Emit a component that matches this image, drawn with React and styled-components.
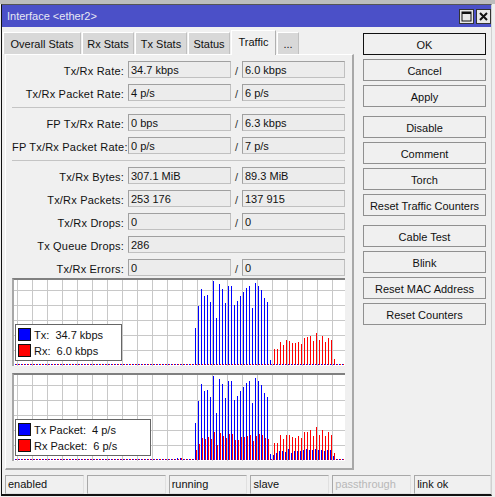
import React from 'react';
import styled, { createGlobalStyle } from 'styled-components';

const GlobalStyle = createGlobalStyle`
  html, body {
    margin: 0;
    padding: 0;
    background: #efefef;
  }
  body {
    font-family: "Liberation Sans", Arial, sans-serif;
    font-size: 11px;
    color: #111;
  }
`;

const Page = styled.div`
  width: 495px;
  height: 497px;
  overflow: hidden;
`;

const TopEdge = styled.div`
  height: 4px;
  background: #bdbdbd;
`;

const Window = styled.div`
  width: 491px;
  height: 492px;
  margin-left: 1px;
  box-sizing: border-box;
  background: #f0f0f0;
  border-left: 1px solid #111;
  border-top: 1px solid #555;
  border-bottom: 2px solid #111;
  border-right: 1px solid #d0d0d0;
  display: flex;
  flex-direction: column;
`;

const TitleBar = styled.div`
  height: 22px;
  background: #4b50c8;
  display: flex;
  align-items: center;
  justify-content: space-between;
  padding: 0 0 0 5px;
  color: #e8e8f4;
`;

const TitleButtons = styled.div`
  display: flex;
  gap: 2px;
`;

const TitleButton = styled.div`
  width: 15px;
  height: 15px;
  box-sizing: border-box;
  background: #e8e8e8;
  border: 1px solid #333;
  display: flex;
  align-items: center;
  justify-content: center;
`;

const Body = styled.div`
  flex: 1;
  display: flex;
  min-height: 0;
`;

const LeftPane = styled.div`
  width: 351px;
  display: flex;
  flex-direction: column;
`;

const TabStrip = styled.div`
  height: 27px;
  display: flex;
  align-items: flex-end;
  gap: 1px;
  padding-left: 1px;
  box-sizing: border-box;
`;

const Tab = styled.div`
  width: ${p => p.$w}px;
  height: ${p => (p.$active ? 25 : 22)}px;
  box-sizing: border-box;
  display: flex;
  align-items: center;
  justify-content: center;
  background: ${p => (p.$active ? '#f0f0f0' : '#d8d8d8')};
  border-top: 1px solid #fff;
  border-left: 1px solid #fff;
  border-right: 1px solid ${p => (p.$active ? '#b0b0b0' : '#c0c0c0')};
  padding-bottom: ${p => (p.$active ? 2 : 0)}px;
  margin-bottom: ${p => (p.$active ? -1 : 0)}px;
  position: relative;
`;

const Panel = styled.div`
  width: 349px;
  height: 416px;
  margin-left: 3px;
  box-sizing: border-box;
  border-top: 1px solid #fff;
  border-left: 1px solid #fff;
  border-right: 2px solid #a8a8a8;
  border-bottom: 2px solid #a8a8a8;
  padding: 6px 0 0 6px;
`;

const Row = styled.div`
  display: grid;
  grid-template-columns: 116px 103px 11px 103px;
  height: 17px;
  margin-bottom: 6px;
  align-items: center;
`;

const Label = styled.div`
  text-align: right;
  margin-right: 4px;
  padding-top: 2px;
  letter-spacing: 0.2px;
  white-space: nowrap;
`;

const Field = styled.div`
  height: 17px;
  box-sizing: border-box;
  border: 1px solid #a0a0a0;
  border-right-color: #c0c0c0;
  border-bottom-color: #c0c0c0;
  background: #ececec;
  padding-left: 2px;
  line-height: 16px;
  grid-column: ${p => (p.$wide ? '2 / 5' : 'auto')};
  white-space: nowrap;
`;

const Slash = styled.div`
  text-align: center;
  padding-top: 2px;
  color: #333;
`;

const Separator = styled.div`
  width: 333px;
  height: 1px;
  background: #c4c4c4;
  margin: 1px 0 6px;
`;

const GraphBox = styled.div`
  position: relative;
  width: 333px;
  height: 88px;
  box-sizing: border-box;
  margin-top: ${p => p.$top}px;
  background: #fff;
  border-top: 2px solid #808080;
  border-left: 2px solid #a8a8a8;
  svg {
    display: block;
  }
`;

const Legend = styled.div`
  position: absolute;
  left: 1px;
  top: 44px;
  width: ${p => p.$w}px;
  height: 37px;
  box-sizing: border-box;
  background: #fff;
  border: 1px solid #666;
  padding: 3px 2px;
  display: flex;
  flex-direction: column;
  gap: 3px;
`;

const LegendRow = styled.div`
  display: flex;
  align-items: center;
  height: 13px;
  gap: 3px;
  white-space: pre;
`;

const Swatch = styled.div`
  width: 13px;
  height: 13px;
  box-sizing: border-box;
  border: 1px solid #111;
  background: ${p => p.$color};
`;

const ButtonColumn = styled.div`
  margin-left: 10px;
  padding-top: 6px;
  width: 123px;
  display: flex;
  flex-direction: column;
  gap: 9px;
`;

const ButtonGroup = styled.div`
  display: flex;
  flex-direction: column;
  gap: 4px;
`;

const Button = styled.div`
  height: 22px;
  box-sizing: border-box;
  display: flex;
  align-items: center;
  justify-content: center;
  padding-top: 1px;
  background: #f0f0f0;
  border: 1px solid ${p => (p.$primary ? '#111' : '#909090')};
`;

const StatusBar = styled.div`
  display: flex;
  gap: 3px;
  padding: 3px 0 0 3px;
`;

const StatusCell = styled.div`
  width: ${p => p.$w || 79}px;
  height: 19px;
  box-sizing: border-box;
  border-top: 1px solid #a8a8a8;
  border-left: 1px solid #a8a8a8;
  border-right: 1px solid #e0e0e0;
  border-bottom: 1px solid #e0e0e0;
  padding-left: 2px;
  line-height: 17px;
  color: ${p => (p.$dim ? '#b8b8b8' : '#111')};
`;

// bar tops read from the graph, in 3x pixels above the baseline (275)
const txX = [46, 55, 64, 73, 82, 91, 100, 109, 118, 127, 136, 145, 154, 163, 172, 181, 190, 199, 208, 217, 226, 235, 244, 253, 262, 271];
const txTop = [165, 99, 48, 69, 66, 87, 24, 135, 33, 48, 90, 39, 39, 96, 84, 69, 57, 45, 39, 105, 30, 39, 51, 75, 87, 261];
const rxX = [283, 292, 301, 310, 319, 328, 337, 346, 355, 364, 373, 382, 391, 400, 409, 418, 427, 436, 445, 454, 463];
const rxTop = [228, 228, 207, 216, 201, 204, 210, 210, 207, 213, 195, 192, 189, 204, 180, 201, 189, 207, 195, 201, 258];

const pktRxX = [48, 57, 66, 75, 84, 93, 102, 111, 120, 129, 138, 147, 156, 165, 174, 183, 192, 201, 210, 219, 228, 237, 246, 255, 264];
const pktRxTop = [245, 228, 210, 213, 207, 213, 192, 231, 195, 204, 210, 198, 198, 216, 216, 207, 207, 204, 201, 219, 204, 198, 201, 210, 213];
const pktTxX = [271, 280, 289, 298, 307, 316, 325, 334, 343, 352, 361, 370, 379, 388, 397, 406, 415, 424, 433, 442, 451, 460];
const pktTxTop = [258, 261, 255, 249, 249, 252, 243, 255, 249, 249, 249, 246, 243, 246, 246, 243, 246, 246, 249, 246, 246, 264];
const pktRx2Top = [225, 225, 201, 213, 201, 201, 207, 210, 204, 210, 192, 192, 186, 204, 177, 201, 186, 204, 192, 201, 255];

const BLUE = '#0000ff';
const RED = '#ff0000';

const toBars = (xs, tops, color) =>
  xs.map((x, i) => ({ x: Math.round(166 + x / 3), h: Math.round((275 - tops[i]) / 3), color }));

const traffic = [...toBars(txX, txTop, BLUE), ...toBars(rxX, rxTop, RED)];
const packets = [
  ...toBars(txX.slice(0, 25), txTop.slice(0, 25), BLUE),
  ...toBars(pktRxX, pktRxTop, RED),
  ...toBars(pktTxX, pktTxTop, BLUE),
  ...toBars(rxX, pktRx2Top, RED),
  { x: 166, h: 2, color: BLUE },
  { x: 167, h: 2, color: RED },
  { x: 163, h: 2, color: BLUE },
];

function GraphPlot({ bars }) {
  const grid = [];
  for (let x = 3; x < 331; x += 15) {
    grid.push(<rect key={`v${x}`} x={x} y={0} width={1} height={86} fill="#c8c8c8" />);
  }
  for (let y = 10; y < 85; y += 15) {
    grid.push(<rect key={`h${y}`} x={0} y={y} width={331} height={1} fill="#c8c8c8" />);
  }
  const dots = [];
  for (let x = 1; x < 331; x += 3) {
    dots.push(<rect key={`b${x}`} x={x} y={84} width={1} height={1} fill={BLUE} />);
    dots.push(<rect key={`r${x}`} x={x + 1} y={84} width={1} height={1} fill={RED} />);
  }
  return (
    <svg width="331" height="86" shapeRendering="crispEdges">
      {grid}
      {dots}
      {bars.map((b, i) => (
        <rect key={i} x={b.x} y={85 - b.h} width={1} height={b.h} fill={b.color} />
      ))}
    </svg>
  );
}

function Graph({ top, bars, width, lines }) {
  return (
    <GraphBox $top={top}>
      <GraphPlot bars={bars} />
      <Legend $w={width}>
        {lines.map(line => (
          <LegendRow key={line.text}>
            <Swatch $color={line.color} />
            <span>{line.text}</span>
          </LegendRow>
        ))}
      </Legend>
    </GraphBox>
  );
}

const tabs = [
  { name: 'Overall Stats', w: 78 },
  { name: 'Rx Stats', w: 52 },
  { name: 'Tx Stats', w: 52 },
  { name: 'Status', w: 42 },
  { name: 'Traffic', w: 45, active: true },
  { name: '...', w: 22 },
];

function StatRow({ label, a, b }) {
  return (
    <Row>
      <Label>{label}</Label>
      {b === undefined ? (
        <Field $wide>{a}</Field>
      ) : (
        <>
          <Field>{a}</Field>
          <Slash>/</Slash>
          <Field>{b}</Field>
        </>
      )}
    </Row>
  );
}

export default function App() {
  return (
    <Page>
      <GlobalStyle />
      <TopEdge />
      <Window>
        <TitleBar>
          <span>Interface &lt;ether2&gt;</span>
          <TitleButtons>
            <TitleButton>
              <svg width="11" height="11" viewBox="0 0 11 11">
                <rect x="1" y="1" width="9" height="9" fill="none" stroke="#111" strokeWidth="1" />
                <rect x="1" y="1" width="9" height="2" fill="#111" />
              </svg>
            </TitleButton>
            <TitleButton>
              <svg width="11" height="11" viewBox="0 0 11 11">
                <path d="M2 2 L9 9 M9 2 L2 9" stroke="#111" strokeWidth="2" />
              </svg>
            </TitleButton>
          </TitleButtons>
        </TitleBar>
        <Body>
          <LeftPane>
            <TabStrip>
              {tabs.map(t => (
                <Tab key={t.name} $w={t.w} $active={t.active}>{t.name}</Tab>
              ))}
            </TabStrip>
            <Panel>
              <StatRow label="Tx/Rx Rate:" a="34.7 kbps" b="6.0 kbps" />
              <StatRow label="Tx/Rx Packet Rate:" a="4 p/s" b="6 p/s" />
              <Separator />
              <StatRow label="FP Tx/Rx Rate:" a="0 bps" b="6.3 kbps" />
              <StatRow label="FP Tx/Rx Packet Rate:" a="0 p/s" b="7 p/s" />
              <Separator />
              <StatRow label="Tx/Rx Bytes:" a="307.1 MiB" b="89.3 MiB" />
              <StatRow label="Tx/Rx Packets:" a="253 176" b="137 915" />
              <StatRow label="Tx/Rx Drops:" a="0" b="0" />
              <StatRow label="Tx Queue Drops:" a="286" />
              <StatRow label="Tx/Rx Errors:" a="0" b="0" />
              <Graph
                top={-4}
                bars={traffic}
                width={107}
                lines={[
                  { color: BLUE, text: 'Tx:  34.7 kbps' },
                  { color: RED, text: 'Rx:  6.0 kbps' },
                ]}
              />
              <Graph
                top={7}
                bars={packets}
                width={136}
                lines={[
                  { color: BLUE, text: 'Tx Packet:  4 p/s' },
                  { color: RED, text: 'Rx Packet:  6 p/s' },
                ]}
              />
            </Panel>
          </LeftPane>
          <ButtonColumn>
            <ButtonGroup>
              <Button $primary>OK</Button>
              <Button>Cancel</Button>
              <Button>Apply</Button>
            </ButtonGroup>
            <ButtonGroup>
              <Button>Disable</Button>
              <Button>Comment</Button>
              <Button>Torch</Button>
              <Button>Reset Traffic Counters</Button>
            </ButtonGroup>
            <ButtonGroup>
              <Button>Cable Test</Button>
              <Button>Blink</Button>
              <Button>Reset MAC Address</Button>
              <Button>Reset Counters</Button>
            </ButtonGroup>
          </ButtonColumn>
        </Body>
        <StatusBar>
          <StatusCell>enabled</StatusCell>
          <StatusCell />
          <StatusCell>running</StatusCell>
          <StatusCell>slave</StatusCell>
          <StatusCell $dim>passthrough</StatusCell>
          <StatusCell $w={77}>link ok</StatusCell>
        </StatusBar>
      </Window>
    </Page>
  );
}
